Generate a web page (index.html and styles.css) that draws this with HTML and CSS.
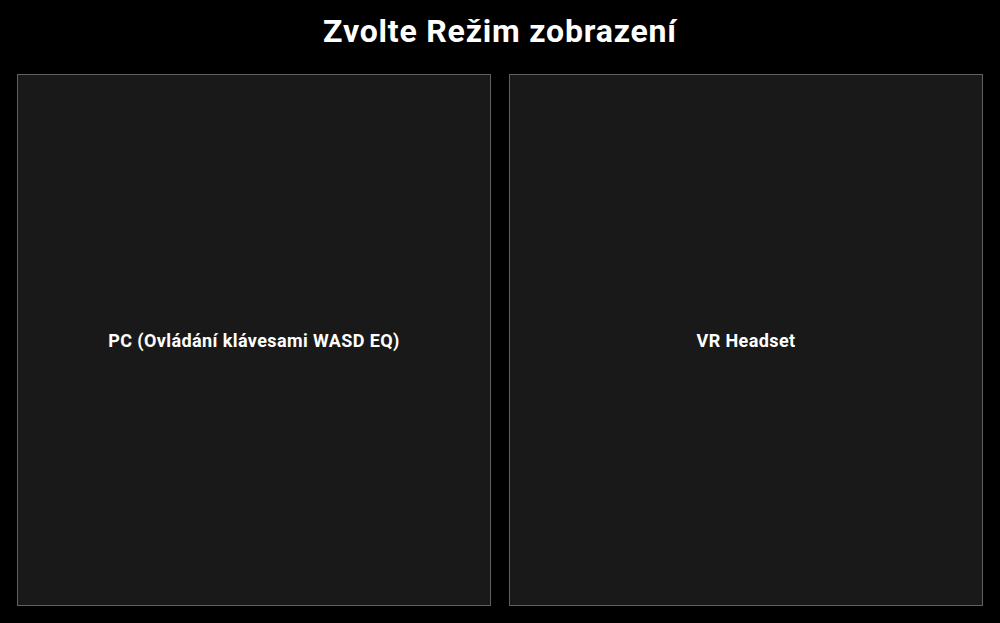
FILE: index.html
```html
<!DOCTYPE html>
<html lang="cs">
<head>
<meta charset="utf-8">
<title>Zvolte Režim zobrazení</title>
<link rel="stylesheet" href="styles.css">
</head>
<body>
<div class="page">
  <h1 class="title">Zvolte Režim zobrazení</h1>
  <div class="options">
    <button class="option">PC (Ovládání klávesami WASD EQ)</button>
    <button class="option">VR Headset</button>
  </div>
</div>
</body>
</html>
```
FILE: styles.css
```css
html, body {
  margin: 0;
  padding: 0;
  background: #000;
  height: 100%;
}
.page {
  display: flex;
  flex-direction: column;
  height: 623px;
  font-family: Roboto, "Liberation Sans", sans-serif;
  color: #fff;
}
.title {
  margin: 0;
  height: 74px;
  display: flex;
  align-items: center;
  justify-content: center;
  font-size: 32px;
  font-weight: 700;
  letter-spacing: 0.8px;
  padding-bottom: 13px;
  box-sizing: border-box;
}
.options {
  flex: 1;
  display: flex;
  gap: 18px;
  padding: 0 17px 17px;
}
.option {
  flex: 1;
  background: #191919;
  border: 1px solid #606060;
  color: #fff;
  font-family: Roboto, "Liberation Sans", sans-serif;
  font-size: 18px;
  font-weight: 700;
  letter-spacing: 0.4px;
  display: flex;
  align-items: center;
  justify-content: center;
  padding: 0;
  cursor: pointer;
}
```
